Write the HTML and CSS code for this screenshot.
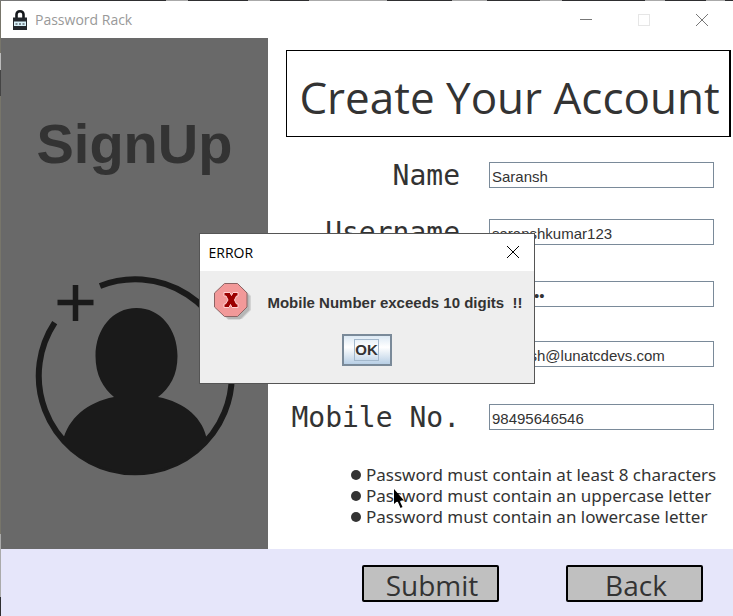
FILE: index.html
```html
<!DOCTYPE html>
<html lang="en">
<head>
<meta charset="utf-8">
<title>Password Rack</title>
<link rel="stylesheet" href="styles.css">
</head>
<body>
<div class="window">
  <header class="titlebar">
    <svg class="app-icon" viewBox="0 0 14 20" aria-hidden="true">
      <path d="M3.500 8V4.500Q3.500 1.300 7 1.300T10.500 4.500V8" fill="none" stroke="#15181c" stroke-width="2.600"/>
      <rect x="0" y="7.500" width="14" height="12.500" fill="#23272c"/>
      <rect x="1" y="11.500" width="12" height="4.500" fill="#d9f2fa"/>
      <path d="M2.500 14h9" stroke="#23272c" stroke-width="1" stroke-dasharray="2 1.500"/>
    </svg>
    <h1 class="app-name">Password Rack</h1>
    <div class="window-controls">
      <button type="button" aria-label="Minimize"><svg viewBox="0 0 12 12"><path d="M0 5.500h12" stroke="#777"/></svg></button>
      <button type="button" aria-label="Maximize"><svg viewBox="0 0 12 12"><rect x=".5" y=".5" width="11" height="11" fill="none" stroke="#e6e6e6"/></svg></button>
      <button type="button" aria-label="Close"><svg viewBox="0 0 12 12"><path d="M0 0l12 12M12 0L0 12" stroke="#777"/></svg></button>
    </div>
  </header>

  <form class="signup">
    <aside class="sidebar">
      <h2>SignUp</h2>
      <svg class="avatar" viewBox="0 0 200 200" aria-hidden="true">
        <path d="M65 10A96.500 96.500 0 1 1 19.700 46.700" fill="none" stroke="#1a1a1a" stroke-width="6"/>
        <path d="M40.500 9v36M22.500 26.500h36" stroke="#1a1a1a" stroke-width="5.500"/>
        <path d="M101.500 32C125.500 32 142.500 53 142.500 80C142.500 99 135 112 123 121C150 126 169 143 172 164.500A96.700 96.700 0 0 1 28 164.500C33 143 52 126 79 121C68 112 60.500 99 60.500 80C60.500 53 77.500 32 101.500 32Z" fill="#1a1a1a"/>
      </svg>
    </aside>

    <main class="content">
      <h2 class="heading">Create Your Account</h2>
      <div class="fields">
        <label for="name">Name</label>
        <input id="name" type="text" value="Saransh">
        <label for="username">Username</label>
        <input id="username" type="text" value="saranshkumar123">
        <label for="password">Password</label>
        <input id="password" type="password" value="saransh123">
        <label for="email">Email</label>
        <input id="email" type="text" value="saransh@lunatcdevs.com">
        <label for="mobile">Mobile No.</label>
        <input id="mobile" type="text" value="98495646546">
      </div>
      <ul class="rules">
        <li>Password must contain at least 8 characters</li>
        <li>Password must contain an uppercase letter</li>
        <li>Password must contain an lowercase letter</li>
      </ul>
    </main>

    <footer class="actions">
      <button type="submit">Submit</button>
      <button type="button">Back</button>
    </footer>
  </form>

  <dialog class="alert" open aria-labelledby="alert-title">
    <div class="alert-bar">
      <h2 id="alert-title">ERROR</h2>
      <button type="button" aria-label="Close dialog"><svg viewBox="0 0 12 12"><path d="M0 0l12 12M12 0L0 12" stroke="#000"/></svg></button>
    </div>
    <div class="alert-body">
      <div class="alert-message">
        <svg class="alert-icon" viewBox="0 0 38 40" aria-hidden="true">
          <path d="M13 4h15l9 9v14l-9 9H15L6 28z" fill="#b8b8b8" opacity=".5"/>
          <path d="M12 3.500h14l9.500 9.500v14L26 36.500H14L5 28z" fill="#999" opacity=".5"/>
          <path d="M10.500 .5h13l9.500 9.500v14l-9.500 9.500h-13L.5 24V10z" fill="#f29999" stroke="#8c6464"/>
          <path d="M10 9.500h6l1.500 3 1.500-3h5v3.500h-1.500L20.500 17l2 4H24v3.500h-6l-1.500-3-1.500 3h-5V21h1.500l2.500-4-2-4H10z" fill="#9b0000" stroke="#ffd0d0" stroke-width="1"/>
        </svg>
        <p>Mobile Number exceeds 10 digits  !!</p>
      </div>
      <button type="button" class="ok"><span>OK</span></button>
    </div>
  </dialog>

  <svg class="pointer" viewBox="0 0 12 20" aria-hidden="true">
    <path d="M0 0v15l3.500-3 3 7 2-1-3-6.500H10z" fill="#000"/>
  </svg>
</div>
</body>
</html>
```
FILE: styles.css
```css
* {
  box-sizing: border-box;
}

body {
  margin: 0;
  color: #333;
  font-family: "Open Sans", "Noto Sans", sans-serif;
}

h1,
h2,
p,
ul {
  margin: 0;
  padding: 0;
  font-weight: 400;
}

button {
  padding: 0;
  font: inherit;
  color: inherit;
}

.window {
  position: relative;
  display: flex;
  flex-direction: column;
  min-height: 100vh;
  padding: 1px 0 0 1px;
  background:
    linear-gradient(90deg, #777 50px, #2e2e30 50px 166px, #aaa 166px 188px, #2e2e30 188px 248px, #aaa 248px 270px, #2e2e30 270px 309px, #aaa 309px 387px, #2e2e30 387px 452px, #aaa 452px 487px, #2e2e30 487px 540px, #aaa 540px 562px, #2e2e30 562px 645px, #aaa 645px 665px, #2e2e30 665px 706px, #aaa 706px 725px, #2e2e30 725px) top / 100% 1px no-repeat,
    linear-gradient(#77756a 53px, #bbb 53px 70px, #444 70px 96px, #77756a 96px 534px, #aaa 534px 597px, #2e2e30 597px) left / 1px 100% no-repeat,
    #fff;
}

.titlebar {
  display: flex;
  align-items: center;
  height: 37px;
  padding: 0 2px 0 12px;
}

.app-icon {
  width: 14px;
  height: 20px;
}

.app-name {
  flex: 1;
  margin-left: 8px;
  color: #999;
  font-size: 14px;
}

.window-controls {
  display: flex;
}

.window-controls button,
.alert-bar button {
  display: grid;
  place-items: center;
  border: 0;
  background: none;
}

.window-controls button {
  width: 58px;
  height: 36px;
}

.window-controls svg,
.alert-bar svg {
  width: 12px;
  height: 12px;
}

.signup {
  flex: 1;
  display: grid;
  grid-template-columns: 267px 1fr;
  grid-template-rows: 1fr auto;
}

.sidebar {
  display: flex;
  flex-direction: column;
  align-items: center;
  gap: 99px;
  padding-top: 73px;
  background: #696969;
}

.sidebar h2 {
  font: bold 56px/66px "Liberation Sans", Arial, sans-serif;
}

.avatar {
  width: 200px;
  height: 200px;
}

.content {
  padding: 12px 2px 0 18px;
}

.heading {
  border: 1px solid #000;
  border-right-width: 2px;
  padding: 8px 0 0 3px;
  font-size: 44px;
  line-height: 77px;
  text-align: center;
  white-space: nowrap;
}

.fields {
  display: grid;
  grid-template-columns: 1fr 225px;
  grid-template-rows: 57px 62px 60px 63px 26px;
  column-gap: 29px;
  padding: 25px 17px 0 0;
}

.fields label {
  font: 28px/28px "DejaVu Sans Mono", monospace;
  text-align: right;
  white-space: nowrap;
}

.fields input {
  width: 100%;
  height: 26px;
  padding: 3px 2px 0;
  border: 1px solid #7a8a99;
  border-radius: 0;
  background: #fff;
  color: #333;
  font: 15px "Liberation Sans", Arial, sans-serif;
}

.rules {
  margin: 34px 0 0 65px;
  list-style: none;
  font: 17px/21px "Noto Sans", sans-serif;
  white-space: nowrap;
}

.rules li {
  display: flex;
  align-items: center;
  gap: 5px;
}

.rules li::before {
  content: "";
  width: 10px;
  height: 10px;
  border-radius: 50%;
  background: #333;
}

.actions {
  grid-column: 1 / -1;
  display: flex;
  justify-content: flex-end;
  gap: 67px;
  padding: 16px 30px 14px;
  background: #e6e6fa;
}

.actions button {
  width: 137px;
  height: 37px;
  padding: 1px 0 0 3px;
  border: 2px solid #000;
  border-radius: 2px;
  background: #c0c0c0;
  font-size: 28px;
  line-height: 34px;
}

.alert {
  position: absolute;
  inset: 0;
  width: 336px;
  height: fit-content;
  margin: auto;
  padding: 0;
  border: 1px solid #555;
  background: #eee;
  color: #333;
}

.alert-bar {
  display: flex;
  align-items: center;
  justify-content: space-between;
  height: 37px;
  padding: 0 15px 0 9px;
  background: #fff;
  color: #000;
}

.alert-bar h2 {
  font-size: 14px;
}

.alert-body {
  display: flex;
  flex-direction: column;
  align-items: center;
  gap: 11px;
  padding: 12px 11px 17px;
}

.alert-message {
  display: flex;
  align-items: center;
  justify-content: space-between;
  width: 100%;
  padding-left: 3px;
}

.alert-message p {
  font: bold 15px/18px "Liberation Sans", Arial, sans-serif;
  white-space: pre;
}

.alert-icon {
  width: 38px;
  height: 40px;
}

.ok {
  display: grid;
  place-items: center;
  width: 50px;
  height: 32px;
  border: 2px solid #7a8a99;
  background: linear-gradient(#dce9f4, #fff 40%, #b8cfe5);
  font: bold 15px/20px "Liberation Sans", Arial, sans-serif;
}

.ok span {
  border: 1px solid #a3b8cc;
}

.pointer {
  position: absolute;
  left: 394px;
  top: 489px;
  width: 12px;
  height: 20px;
}
```
